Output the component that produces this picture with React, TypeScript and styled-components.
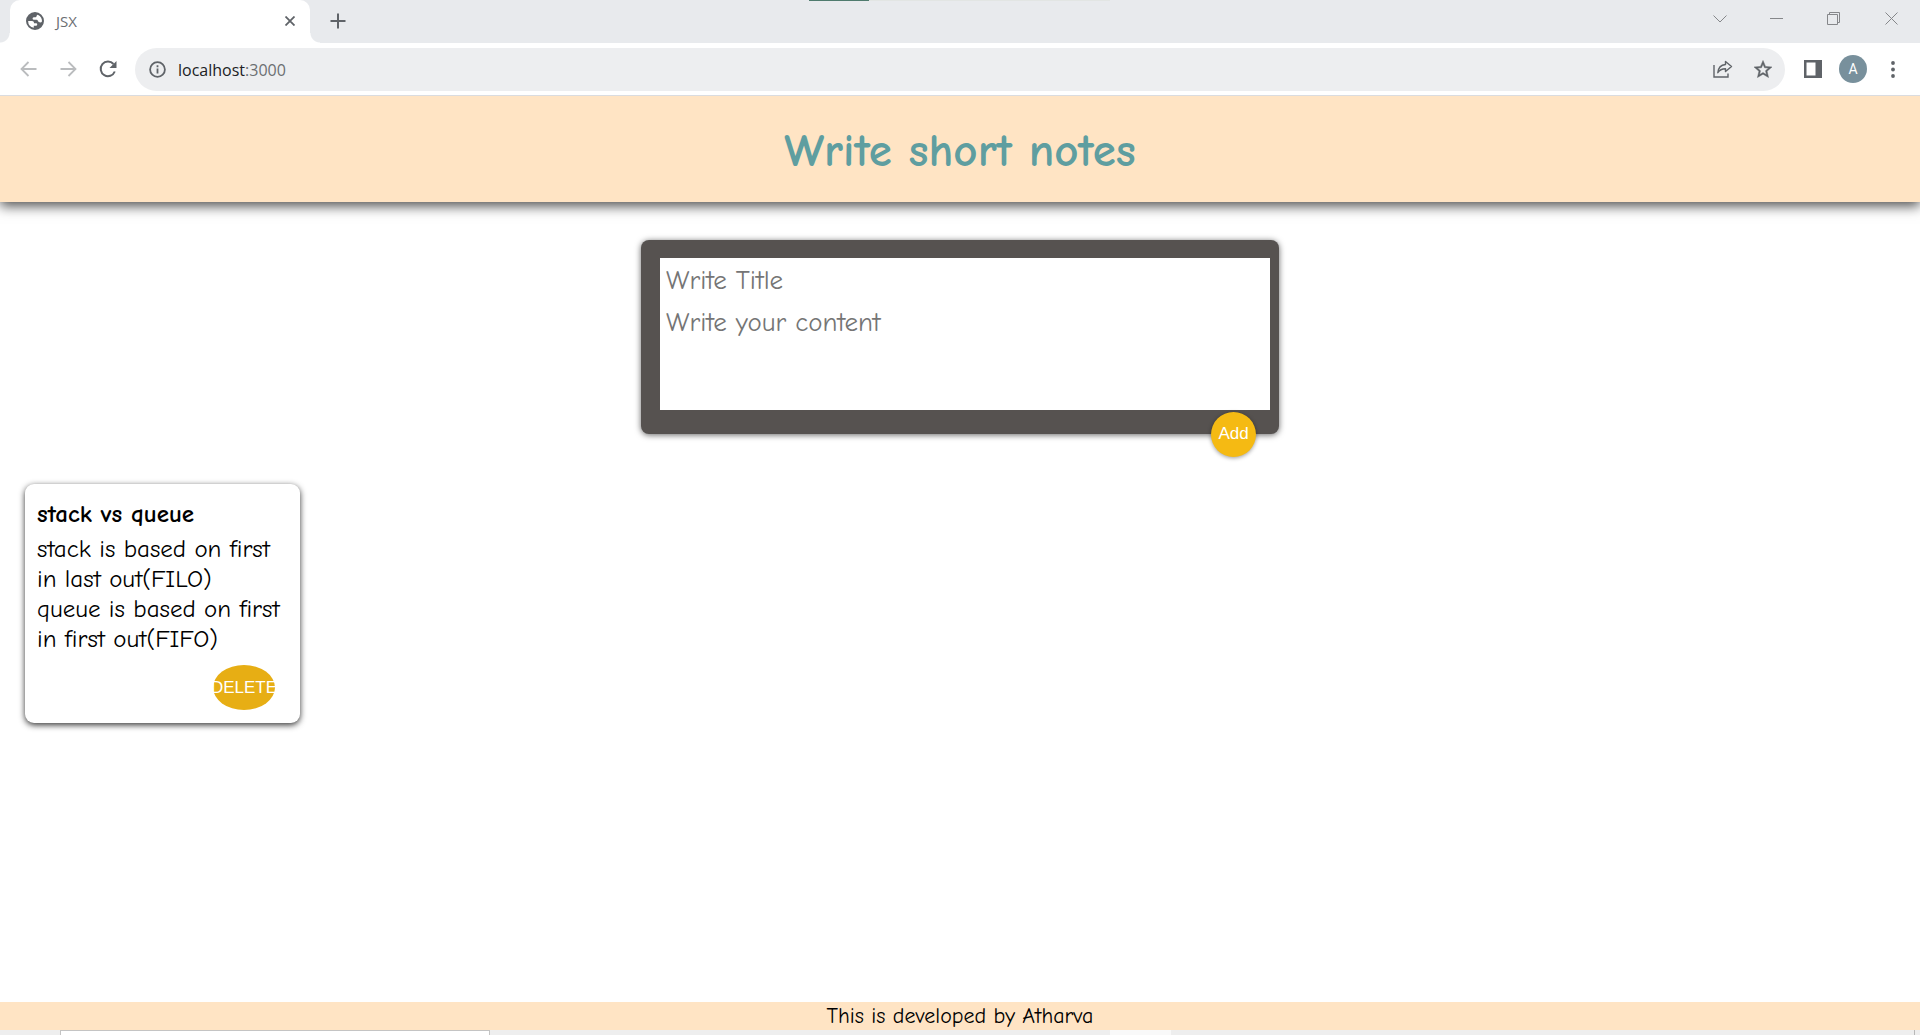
import React, { useState } from "react";
import styled, { createGlobalStyle } from "styled-components";

const GlobalStyle = createGlobalStyle`
  *, *::before, *::after { box-sizing: border-box; }
  body { margin: 0; background: #fff; }
  button, input, textarea { font: inherit; margin: 0; }
`;

const noteFont = `"Comic Sans MS", "Comic Neue", "Noto Sans", sans-serif`;
const chromeFont = `"Segoe UI", "Open Sans", sans-serif`;

const Window = styled.div`
  display: flex;
  flex-direction: column;
  min-height: 100vh;
`;

const TabStrip = styled.div`
  position: relative;
  display: flex;
  align-items: stretch;
  height: 43px;
  padding-left: 10px;
  background: #e8eaed;
  font-family: ${chromeFont};
`;

const LoadTrack = styled.div`
  position: absolute;
  top: 0;
  left: 809px;
  width: 301px;
  height: 1px;
  background: #e2e5e3;
  &::before {
    content: "";
    display: block;
    width: 60px;
    height: 1px;
    background: #4f7b6e;
  }
`;

const Tab = styled.div`
  position: relative;
  display: flex;
  align-items: center;
  width: 300px;
  padding: 0 12px 2px 16px;
  border-radius: 10px 10px 0 0;
  background: #fff;
  &::before,
  &::after {
    content: "";
    position: absolute;
    bottom: 0;
    width: 10px;
    height: 10px;
  }
  &::before {
    left: -10px;
    background: radial-gradient(circle at 0 0, transparent 9px, #fff 10px);
  }
  &::after {
    right: -10px;
    background: radial-gradient(circle at 100% 0, transparent 9px, #fff 10px);
  }
`;

const TabTitle = styled.span`
  flex: 1;
  margin-left: 12px;
  font-size: 15px;
  line-height: 20px;
  color: #6b6e72;
`;

const IconButton = styled.button<{ $w: number; $h: number; $color?: string }>`
  display: flex;
  flex: none;
  align-items: center;
  justify-content: center;
  width: ${(p) => p.$w}px;
  height: ${(p) => p.$h}px;
  padding: 0;
  border: 0;
  background: none;
  color: ${(p) => p.$color ?? "#5f6368"};
`;

const WindowControls = styled.div`
  display: flex;
  margin-left: auto;
`;

const Toolbar = styled.div`
  position: relative;
  z-index: 1;
  display: flex;
  align-items: center;
  height: 53px;
  padding: 0 7px 0 8px;
  border-bottom: 1px solid #dadce0;
  background: #fff;
  font-family: ${chromeFont};
`;

const AddressBar = styled.div`
  display: flex;
  flex: 1;
  align-items: center;
  height: 43px;
  margin: 0 8px 0 7px;
  padding: 0 2px 0 14px;
  border-radius: 22px;
  background: #edeef0;
`;

const Address = styled.span`
  flex: 1;
  margin-left: 12px;
  padding-top: 1px;
  font-size: 16px;
  line-height: 24px;
  color: #202124;
`;

const Port = styled.span`
  color: #6b6e72;
`;

const Avatar = styled.span`
  display: flex;
  align-items: center;
  justify-content: center;
  width: 28px;
  height: 28px;
  border-radius: 50%;
  background: #78909c;
  color: #fff;
  font: 14px/20px Roboto, sans-serif;
`;

const Banner = styled.header`
  display: flex;
  align-items: center;
  justify-content: center;
  height: 106px;
  padding-top: 4px;
  background: bisque;
  box-shadow: 0 4px 12px rgba(0, 0, 0, 0.7);
`;

const Heading = styled.h1`
  margin: 0;
  font: bold 47px/60px ${noteFont};
  color: cadetblue;
`;

const Main = styled.main`
  display: flex;
  flex: 1;
  flex-direction: column;
  padding: 38px 25px;
  gap: 50px;
  font-family: ${noteFont};
`;

const NoteForm = styled.form`
  position: relative;
  display: flex;
  flex-direction: column;
  width: 100%;
  max-width: 638px;
  margin: 0 auto;
  padding: 18px 9px 24px 19px;
  border-radius: 8px;
  background: #565250;
  box-shadow: 0 1px 6px rgba(0, 0, 0, 0.6);
`;

const TitleInput = styled.input`
  height: 44px;
  padding: 0 6px;
  border: 0;
  outline: 0;
  background: #fff;
  font-size: 27px;
  &::placeholder { color: #757575; }
`;

const ContentInput = styled.textarea`
  height: 108px;
  padding: 4px 6px;
  border: 0;
  outline: 0;
  resize: none;
  background: #fff;
  font-size: 27px;
  line-height: 34px;
  &::placeholder { color: #757575; }
`;

const RoundButton = styled.button<{ $width: number; $tone: string }>`
  display: flex;
  align-items: center;
  justify-content: center;
  width: ${(p) => p.$width}px;
  height: 45px;
  padding: 0;
  border: 0;
  border-radius: 50%;
  background: ${(p) => p.$tone};
  color: #fff;
  font: 17px/20px "Liberation Sans", Arial, sans-serif;
`;

const AddButton = styled(RoundButton)`
  position: absolute;
  right: 23px;
  bottom: -23px;
  padding-bottom: 2px;
  box-shadow: 0 1px 4px rgba(0, 0, 0, 0.4);
`;

const NoteList = styled.section`
  display: flex;
  flex-wrap: wrap;
  align-items: flex-start;
  gap: 24px;
`;

const NoteCard = styled.article`
  display: flex;
  flex-direction: column;
  width: 275px;
  padding: 12px 12px 13px;
  border-radius: 9px;
  background: #fff;
  box-shadow: 0 2px 6px rgba(0, 0, 0, 0.8);
`;

const NoteTitle = styled.h2`
  margin: 0;
  font-size: 25px;
  line-height: 36px;
  color: #000;
`;

const NoteText = styled.p`
  margin: 2px 0 11px;
  font-size: 25px;
  line-height: 30px;
  white-space: pre-line;
  color: #000;
`;

const DeleteButton = styled(RoundButton)`
  align-self: flex-end;
  margin-right: 13px;
`;

const Footer = styled.footer`
  padding-top: 1px;
  background: bisque;
  font: 22px/27px ${noteFont};
  text-align: center;
  color: #000;
`;

const TaskbarEdge = styled.div`
  display: flex;
  height: 5px;
  padding: 0 5px 0 60px;
  background: #eee;
`;

const TaskbarSearch = styled.div`
  width: 430px;
  border: 1px solid #c4c4c4;
  border-bottom: 0;
  background: #fff;
`;

const TaskbarActive = styled.div`
  width: 61px;
  margin-left: 620px;
  background: #f9f9f9;
`;

const TaskbarEnd = styled.div`
  width: 1px;
  margin-left: auto;
  background: #b8b8b8;
`;

type Note = { title: string; content: string };

export default function App() {
  const [notes, setNotes] = useState<Note[]>([
    {
      title: "stack vs queue",
      content:
        "stack is based on first in last out(FILO)\nqueue is based on first in first out(FIFO)",
    },
  ]);
  const [title, setTitle] = useState("");
  const [content, setContent] = useState("");

  const addNote = (event: React.FormEvent) => {
    event.preventDefault();
    setNotes([...notes, { title, content }]);
    setTitle("");
    setContent("");
  };

  return (
    <Window>
      <GlobalStyle />
      <TabStrip>
        <LoadTrack />
        <Tab>
          <svg width="18" height="18" viewBox="1 1 22 22" fill="#5f6368" aria-hidden="true">
            <path d="M12 1a11 11 0 1 0 0 22a11 11 0 0 0 0-22zM10.500 20.200A8.400 8.400 0 0 1 3.600 12h4.600c2.300 0 2.600 1.300 2.600 2.900h2.600c1.900 0 1.700 2.600 .2 2.900h-3.100zM20.300 13.300c-.9.800-2.700.7-3.600 0c-1.200-1-1-2.900-2.800-2.900h-3.700c-1.600 0-1.600-3 .2-3h2.300c1.600 0 .7-2.700 2.600-3.100a8.400 8.400 0 0 1 5 9z" />
          </svg>
          <TabTitle>JSX</TabTitle>
          <IconButton type="button" aria-label="Close tab" $w={16} $h={20}>
            <svg width="10" height="10" viewBox="0 0 10 10" stroke="currentColor" strokeWidth="1.800">
              <path d="M.5 .5l9 9M9.500 .5l-9 9" />
            </svg>
          </IconButton>
        </Tab>
        <IconButton type="button" aria-label="New tab" $w={55} $h={42}>
          <svg width="16" height="16" viewBox="0 0 16 16" stroke="currentColor" strokeWidth="2">
            <path d="M8 .5v15M.5 8h15" />
          </svg>
        </IconButton>
        <WindowControls>
          <IconButton type="button" aria-label="Search tabs" $w={57} $h={37} $color="#85878a">
            <svg width="14" height="8" viewBox="0 0 14 8" fill="none" stroke="currentColor">
              <path d="M.5 .5L7 7L13.500 .5" />
            </svg>
          </IconButton>
          <IconButton type="button" aria-label="Minimize" $w={57} $h={37} $color="#85878a">
            <svg width="13" height="1" viewBox="0 0 13 1"><path d="M0 0h13v1H0z" fill="currentColor" /></svg>
          </IconButton>
          <IconButton type="button" aria-label="Restore" $w={57} $h={37} $color="#85878a">
            <svg width="13" height="13" viewBox="0 0 13 13" fill="none" stroke="currentColor">
              <path d="M.5 2.500h10v10H.5zM2.500 2.500v-2h10v10h-2" />
            </svg>
          </IconButton>
          <IconButton type="button" aria-label="Close" $w={58} $h={37} $color="#85878a">
            <svg width="13" height="13" viewBox="0 0 13 13" stroke="currentColor">
              <path d="M.5 .5l12 12M12.500 .5l-12 12" />
            </svg>
          </IconButton>
        </WindowControls>
      </TabStrip>

      <Toolbar>
        <IconButton type="button" aria-label="Back" $w={40} $h={40} $color="#babcbe">
          <svg width="17" height="16" viewBox="0 0 17 16" fill="none" stroke="currentColor" strokeWidth="1.800">
            <path d="M16.500 8H1.500M8.500 1L1.500 8l7 7" />
          </svg>
        </IconButton>
        <IconButton type="button" aria-label="Forward" $w={40} $h={40} $color="#babcbe">
          <svg width="17" height="16" viewBox="0 0 17 16" fill="none" stroke="currentColor" strokeWidth="1.800">
            <path d="M.5 8h15M8.500 1l7 7l-7 7" />
          </svg>
        </IconButton>
        <IconButton type="button" aria-label="Reload" $w={40} $h={40}>
          <svg width="18" height="18" viewBox="0 0 18 18" fill="none" stroke="currentColor" strokeWidth="2">
            <path d="M14.500 4A7.300 7.300 0 1 0 15.800 11.500" />
            <path d="M17.500 1v7h-7z" fill="currentColor" stroke="none" />
          </svg>
        </IconButton>
        <AddressBar>
          <svg width="17" height="17" viewBox="0 0 17 17" fill="none" stroke="#5f6368" strokeWidth="1.800" aria-hidden="true">
            <circle cx="8.500" cy="8.500" r="7.400" />
            <path d="M8.500 7.500v5M8.500 4.300v1.900" />
          </svg>
          <Address>
            localhost<Port>:3000</Port>
          </Address>
          <IconButton type="button" aria-label="Share" $w={40} $h={40}>
            <svg width="20" height="18" viewBox="0 0 20 18" fill="none" stroke="currentColor" strokeWidth="1.400">
              <path d="M1 5v12h14v-3.500" />
              <path d="M12.500 1.500l6 5l-6 5V8.800c-4 0-6 1.200-7.700 3.900c.4-4.400 3-7.700 7.700-8.200z" strokeLinejoin="round" />
            </svg>
          </IconButton>
          <IconButton type="button" aria-label="Bookmark this tab" $w={40} $h={40}>
            <svg width="18" height="18" viewBox="2 2 20 19" fill="currentColor" stroke="currentColor" strokeWidth="0.500">
              <path d="M22 9.240l-7.190-.62L12 2 9.190 8.630 2 9.240l5.460 4.730L5.820 21 12 17.270 18.180 21l-1.630-7.030L22 9.240zM12 15.400l-3.760 2.270 1-4.280-3.320-2.880 4.380-.38L12 6.100l1.710 4.040 4.380.38-3.320 2.880 1 4.280L12 15.400z" />
            </svg>
          </IconButton>
        </AddressBar>
        <IconButton type="button" aria-label="Side panel" $w={40} $h={40}>
          <svg width="18" height="18" viewBox="0 0 18 18" fill="currentColor">
            <path fillRule="evenodd" d="M0 0h18v18H0zM2.500 2.500v13h9v-13z" />
          </svg>
        </IconButton>
        <IconButton type="button" aria-label="Profile" $w={40} $h={40}>
          <Avatar>A</Avatar>
        </IconButton>
        <IconButton type="button" aria-label="Menu" $w={40} $h={40}>
          <svg width="4" height="17" viewBox="0 0 4 17" fill="currentColor">
            <circle cx="2" cy="2" r="1.900" />
            <circle cx="2" cy="8.500" r="1.900" />
            <circle cx="2" cy="15" r="1.900" />
          </svg>
        </IconButton>
      </Toolbar>

      <Banner>
        <Heading>Write short notes</Heading>
      </Banner>

      <Main>
        <NoteForm onSubmit={addNote}>
          <TitleInput
            aria-label="Title"
            placeholder="Write Title"
            value={title}
            onChange={(e) => setTitle(e.target.value)}
          />
          <ContentInput
            aria-label="Content"
            placeholder="Write your content"
            value={content}
            onChange={(e) => setContent(e.target.value)}
          />
          <AddButton type="submit" $width={45} $tone="#f5ba13">
            Add
          </AddButton>
        </NoteForm>

        <NoteList>
          {notes.map((note, index) => (
            <NoteCard key={index}>
              <NoteTitle>{note.title}</NoteTitle>
              <NoteText>{note.content}</NoteText>
              <DeleteButton
                type="button"
                $width={62}
                $tone="#e7ae14"
                onClick={() => setNotes(notes.filter((_, i) => i !== index))}
              >
                DELETE
              </DeleteButton>
            </NoteCard>
          ))}
        </NoteList>
      </Main>

      <Footer>This is developed by Atharva</Footer>
      <TaskbarEdge>
        <TaskbarSearch />
        <TaskbarActive />
        <TaskbarEnd />
      </TaskbarEdge>
    </Window>
  );
}
